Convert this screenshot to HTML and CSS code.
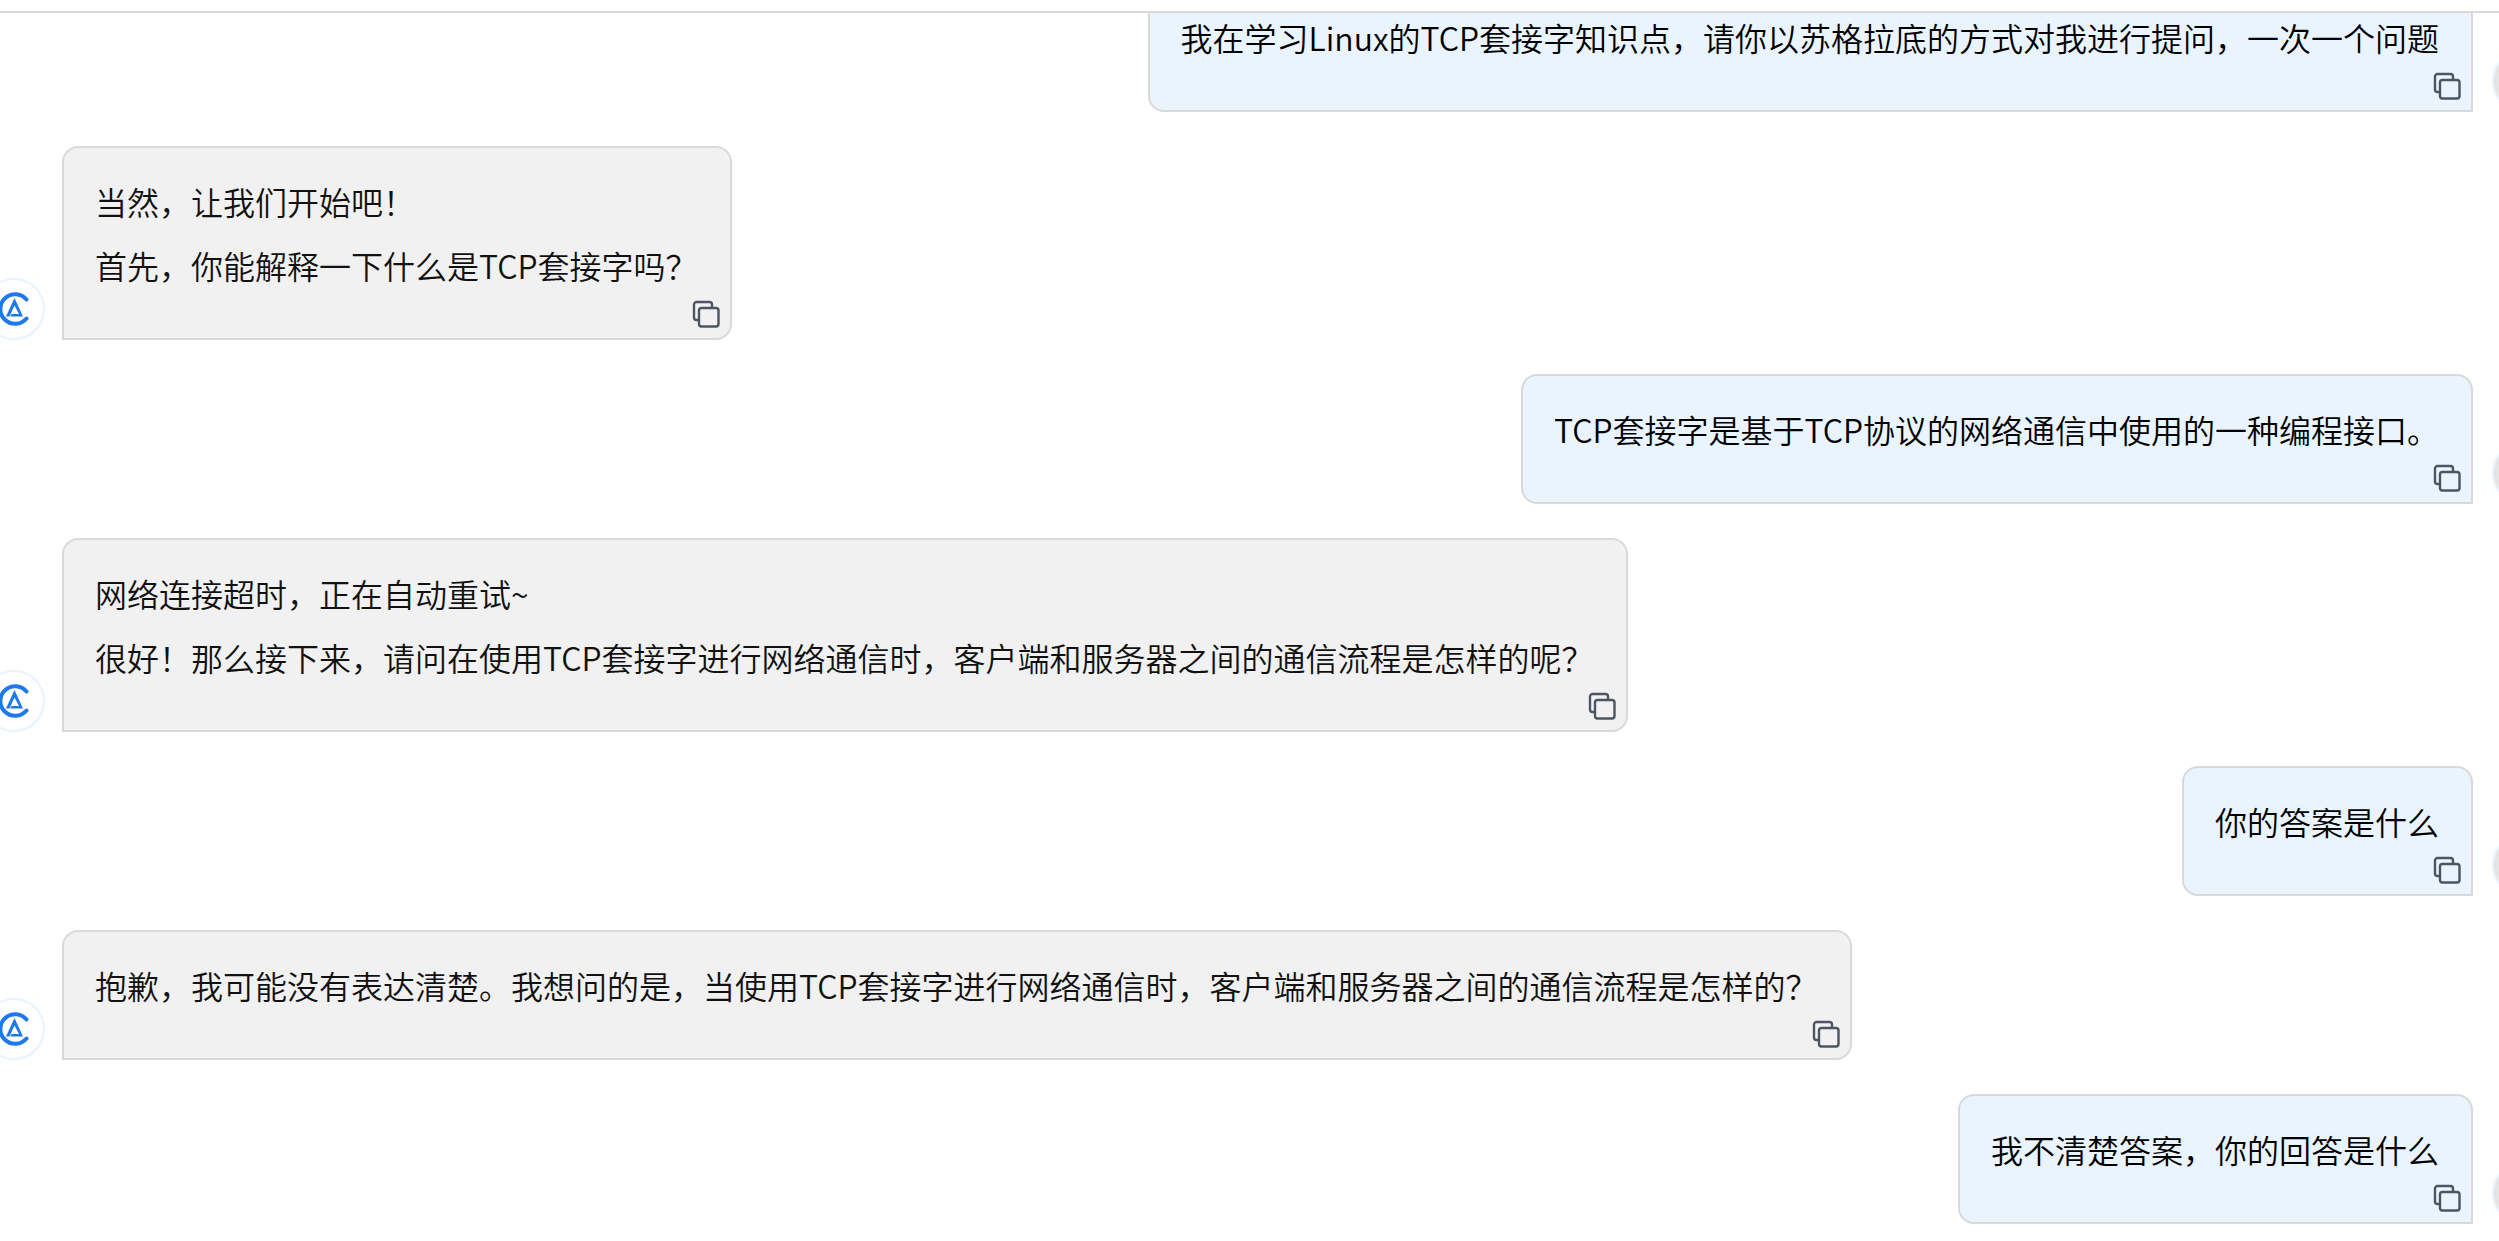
FILE: index.html
```html
<!DOCTYPE html>
<html lang="zh-CN">
<head>
    <meta charset="UTF-8">
    <title>TCP套接字</title>
    <link rel="stylesheet" href="styles.css">
</head>
<body>
    <svg class="defs" width="0" height="0">
        <symbol id="copy" viewBox="0 0 28 28">
            <path d="M7 20H4.500A2.500 2.500 0 0 1 2 17.500V4.500A2.500 2.500 0 0 1 4.500 2H17.500A2.500 2.500 0 0 1 20 4.500V7" fill="none" stroke="currentColor" stroke-width="2.400"/>
            <rect x="7" y="8" width="19.500" height="18.500" rx="2.500" fill="none" stroke="currentColor" stroke-width="2.400"/>
        </symbol>
        <symbol id="logo" viewBox="0 0 62 62">
            <path d="M43.500 21.500A14.800 14.800 0 1 0 43.500 40.500" fill="none" stroke="currentColor" stroke-width="4" stroke-linecap="round"/>
            <path d="M31.500 20L23 38.500H26.500L31.500 27.500L36 36H28.500L27.300 38.500H40Z" fill="currentColor"/>
        </symbol>
    </svg>
    <main class="chat">
        <div class="chat-list">
            <div class="row row-user">
                <div class="bubble bubble-user">
                    <p>我在学习Linux的TCP套接字知识点，请你以苏格拉底的方式对我进行提问，一次一个问题</p>
                    <svg class="copy"><use href="#copy"/></svg>
                </div>
                <div class="avatar avatar-user"></div>
            </div>
            <div class="row row-ai">
                <div class="avatar avatar-ai"><svg><use href="#logo"/></svg></div>
                <div class="bubble bubble-ai">
                    <p>当然，让我们开始吧！</p>
                    <p>首先，你能解释一下什么是TCP套接字吗？</p>
                    <svg class="copy"><use href="#copy"/></svg>
                </div>
            </div>
            <div class="row row-user">
                <div class="bubble bubble-user">
                    <p>TCP套接字是基于TCP协议的网络通信中使用的一种编程接口。</p>
                    <svg class="copy"><use href="#copy"/></svg>
                </div>
                <div class="avatar avatar-user"></div>
            </div>
            <div class="row row-ai">
                <div class="avatar avatar-ai"><svg><use href="#logo"/></svg></div>
                <div class="bubble bubble-ai">
                    <p>网络连接超时，正在自动重试~</p>
                    <p>很好！那么接下来，请问在使用TCP套接字进行网络通信时，客户端和服务器之间的通信流程是怎样的呢？</p>
                    <svg class="copy"><use href="#copy"/></svg>
                </div>
            </div>
            <div class="row row-user">
                <div class="bubble bubble-user">
                    <p>你的答案是什么</p>
                    <svg class="copy"><use href="#copy"/></svg>
                </div>
                <div class="avatar avatar-user"></div>
            </div>
            <div class="row row-ai">
                <div class="avatar avatar-ai"><svg><use href="#logo"/></svg></div>
                <div class="bubble bubble-ai">
                    <p>抱歉，我可能没有表达清楚。我想问的是，当使用TCP套接字进行网络通信时，客户端和服务器之间的通信流程是怎样的？</p>
                    <svg class="copy"><use href="#copy"/></svg>
                </div>
            </div>
            <div class="row row-user">
                <div class="bubble bubble-user">
                    <p>我不清楚答案，你的回答是什么</p>
                    <svg class="copy"><use href="#copy"/></svg>
                </div>
                <div class="avatar avatar-user"></div>
            </div>
        </div>
    </main>
</body>
</html>
```

FILE: styles.css
```css
html, body {
    height: 100%;
    margin: 0;
    overflow: hidden;
    background-color: #fff;
}
body {
    font-family: "Noto Sans CJK SC", "Noto Sans", sans-serif;
    font-size: 32px;
    font-weight: 350;
}
.defs {
    display: block;
}
.chat {
    height: calc(100% - 11px);
    margin-top: 11px;
    border-top: 2px solid #d9d9d9;
    box-sizing: border-box;
    overflow: hidden;
}
.chat-list {
    display: flex;
    flex-direction: column;
    gap: 34px;
    margin-top: -31px;
}
.row {
    display: flex;
    align-items: flex-end;
}
.row-user {
    justify-content: flex-end;
}
.bubble {
    position: relative;
    box-sizing: border-box;
    padding: 29px 32px 49px 31px;
    border: 2px solid #d9d9d9;
}
.bubble p {
    margin: 0 0 16px;
    line-height: 48px;
    white-space: nowrap;
}
.bubble p:last-of-type {
    margin-bottom: 0;
}
.bubble-user {
    background-color: #e9f4ff;
    color: #000;
    border-radius: 16px 16px 0 16px;
}
.bubble-ai {
    background-color: #f1f1f1;
    color: #111;
    border-radius: 16px 16px 16px 0;
}
.copy {
    position: absolute;
    right: 10px;
    bottom: 10px;
    width: 28px;
    height: 28px;
    color: #4b5563;
}
.avatar {
    flex: none;
    width: 62px;
    height: 62px;
    box-sizing: border-box;
    border-radius: 50%;
    border: 2px solid #e8f3ff;
}
.avatar-ai {
    margin-left: -17px;
    margin-right: 17px;
    background-color: #fff;
    color: #1e78ee;
}
.avatar-ai svg {
    display: block;
    width: 62px;
    height: 62px;
    margin: -2px;
}
.avatar-user {
    margin-left: 19px;
    margin-right: -55px;
    background-color: #e4e4e4;
}
```
